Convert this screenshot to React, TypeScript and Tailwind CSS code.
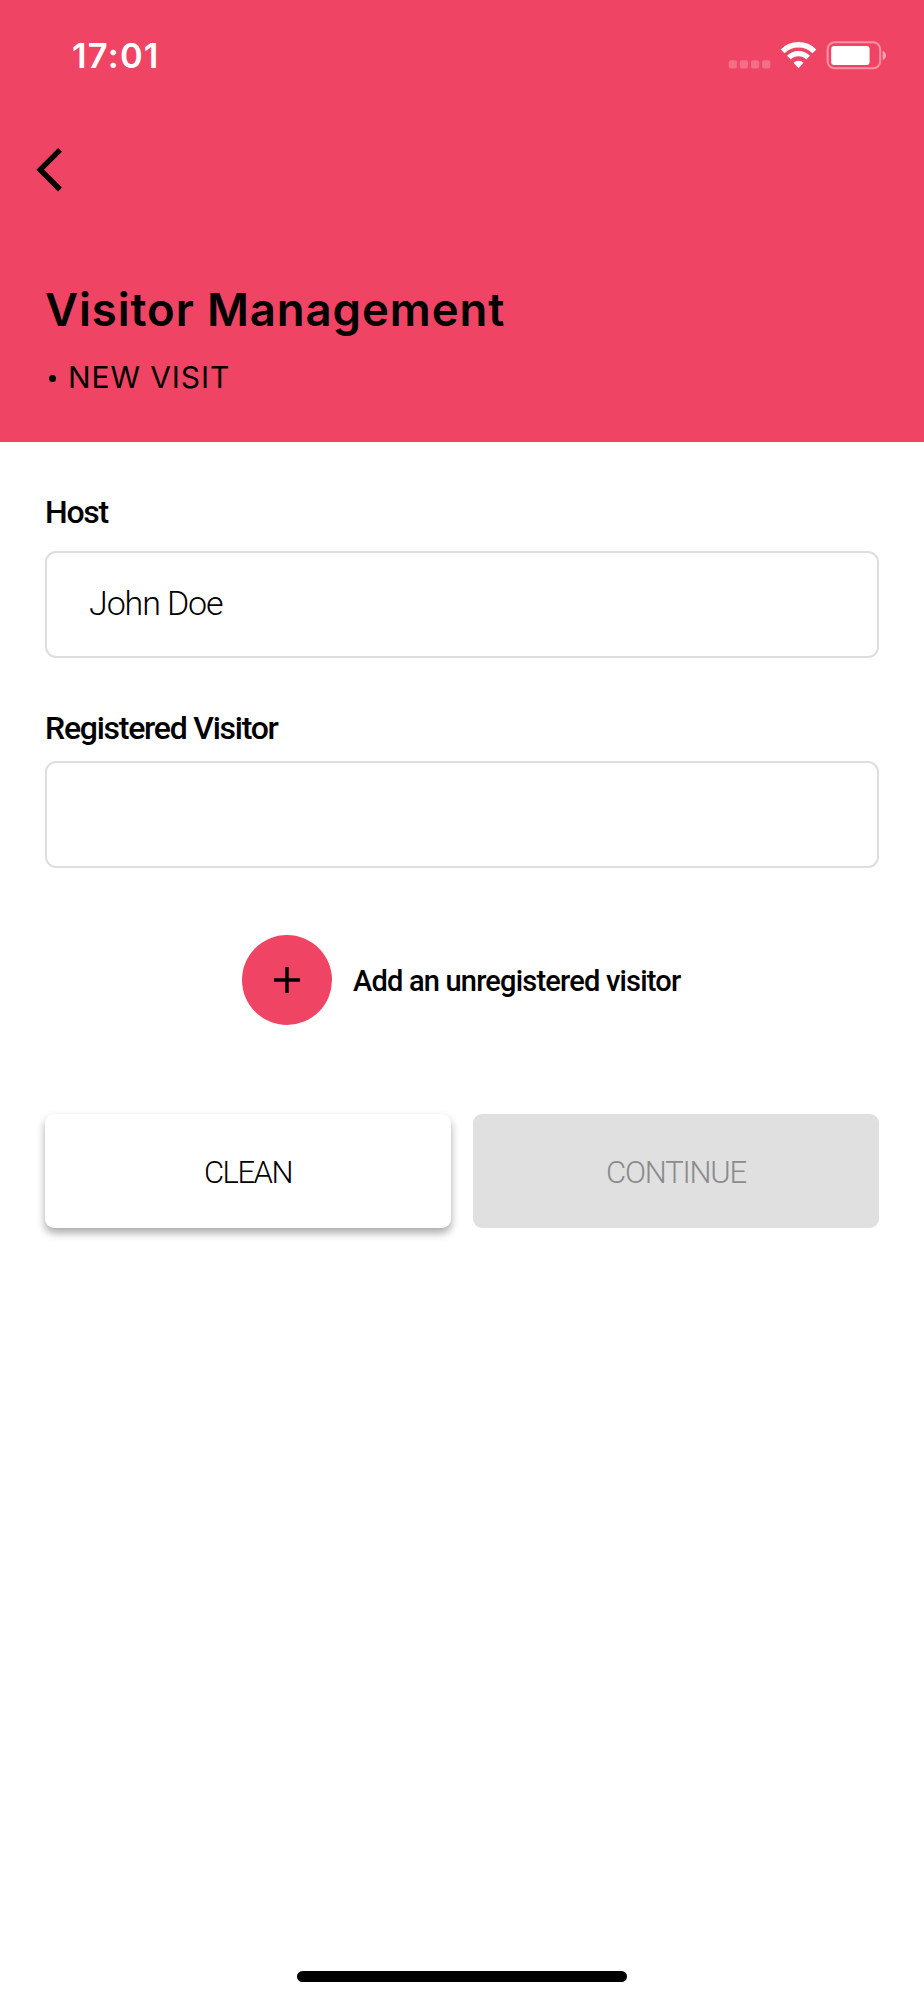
import React from "react";

function StatusIcons() {
  return (
    <svg className="mt-[40px] h-[30px] w-[160px]" viewBox="0 0 160 30" fill="none">
      <g fill="#fff" fillOpacity="0.23">
        <rect x="0.7" y="20.2" width="8.2" height="8.2" rx="2" />
        <rect x="11.8" y="20.2" width="8.2" height="8.2" rx="2" />
        <rect x="23" y="20.2" width="8.2" height="8.2" rx="2" />
        <rect x="34.1" y="20.2" width="8.2" height="8.2" rx="2" />
      </g>
      <g stroke="#fff" strokeWidth="5.4">
        <path d="M54.6 11.3 A22.5 22.5 0 0 1 86.4 11.3" />
        <path d="M60.9 17.6 A13.6 13.6 0 0 1 80.1 17.6" />
      </g>
      <path d="M65.5 22.8 A7.3 7.3 0 0 1 75.5 22.8 L70.5 28.2 Z" fill="#fff" />
      <rect x="99.6" y="2.3" width="52.6" height="26" rx="7" stroke="#fff" strokeOpacity="0.42" strokeWidth="2" />
      <rect x="103.2" y="6" width="38.4" height="19" rx="3" fill="#fff" />
      <path d="M154.6 10.7 Q158 12.3 158 15.4 Q158 18.5 154.6 20.1 Z" fill="#fff" fillOpacity="0.5" />
    </svg>
  );
}

function Field({ label, value, labelClass }: { label: string; value: string; labelClass: string }) {
  return (
    <label className="flex flex-col">
      <span className={labelClass}>{label}</span>
      <input
        readOnly
        value={value}
        className="h-[107px] w-full rounded-[11px] border-2 border-[#dedede] bg-white px-[42px] pb-[3px] text-[34px] font-[350] tracking-[-1.1px] text-black outline-none"
      />
    </label>
  );
}

export default function App() {
  return (
    <div className="flex h-[2000px] w-[924px] flex-col bg-white font-['Roboto',sans-serif] text-black">
      <header className="flex h-[442px] flex-col bg-[#ef4463] font-['Inter',sans-serif]">
        <div className="flex h-[112px] justify-between pr-[36px] pl-[72px]">
          <span className="mt-[34px] text-[34.5px] leading-[44px] font-semibold tracking-[1.2px] text-white">17:01</span>
          <StatusIcons />
        </div>
        <button aria-label="Back" className="mt-[32px] ml-[32px] h-[52px] w-[36px]">
          <svg viewBox="0 0 36 52" fill="none" className="h-[52px] w-[36px]">
            <path d="M28 5.9 L8.2 25.7 L28 45.5" stroke="#000" strokeWidth="5.4" />
          </svg>
        </button>
        <h1 className="mt-[84px] ml-[45px] text-[45.5px] leading-[60px] font-semibold tracking-[0.9px] whitespace-nowrap">
          Visitor Management
        </h1>
        <div className="mt-[17px] ml-[49px] flex h-[40px] items-center">
          <span className="mt-[2px] h-[7px] w-[7px] rounded-full bg-black" />
          <span className="ml-[12px] text-[30px] leading-[40px] tracking-[0.9px]">NEW VISIT</span>
        </div>
      </header>

      <main className="flex flex-col px-[45px] pt-[50px]">
        <Field
          label="Host"
          value="John Doe"
          labelClass="mb-[19px] block h-[40px] text-[32px] leading-[40px] font-medium tracking-[-1.3px]"
        />
        <div className="h-[50px]" />
        <Field
          label="Registered Visitor"
          value=""
          labelClass="mb-[13px] block h-[40px] text-[32px] leading-[40px] font-medium tracking-[-1.25px]"
        />

        <button className="mt-[67px] ml-[197px] flex h-[90px] items-center self-start">
          <span className="flex h-[90px] w-[90px] items-center justify-center rounded-full bg-[#ef4463]">
            <svg viewBox="0 0 26 26" className="h-[26px] w-[26px]" stroke="#000" strokeWidth="3.4">
              <path d="M13 0 V26 M0 13 H26" />
            </svg>
          </span>
          <span className="mt-[2px] ml-[21px] text-[29px] leading-[40px] font-medium tracking-[-0.8px] whitespace-nowrap">
            Add an unregistered visitor
          </span>
        </button>

        <div className="mt-[89px] grid grid-cols-2 gap-[22px]">
          <button className="h-[114px] rounded-[9px] bg-white pt-[5px] text-[31px] font-[350] tracking-[-1.5px] shadow-[0_5px_8px_rgba(0,0,0,0.34)]">
            CLEAN
          </button>
          <button disabled className="h-[114px] rounded-[9px] bg-[#e0e0e0] pt-[5px] text-[31px] font-[350] tracking-[-1.2px] text-[#8b8b8b]">
            CONTINUE
          </button>
        </div>
      </main>

      <div className="mt-auto mb-[18px] h-[11px] w-[330px] self-center rounded-full bg-black" />
    </div>
  );
}
